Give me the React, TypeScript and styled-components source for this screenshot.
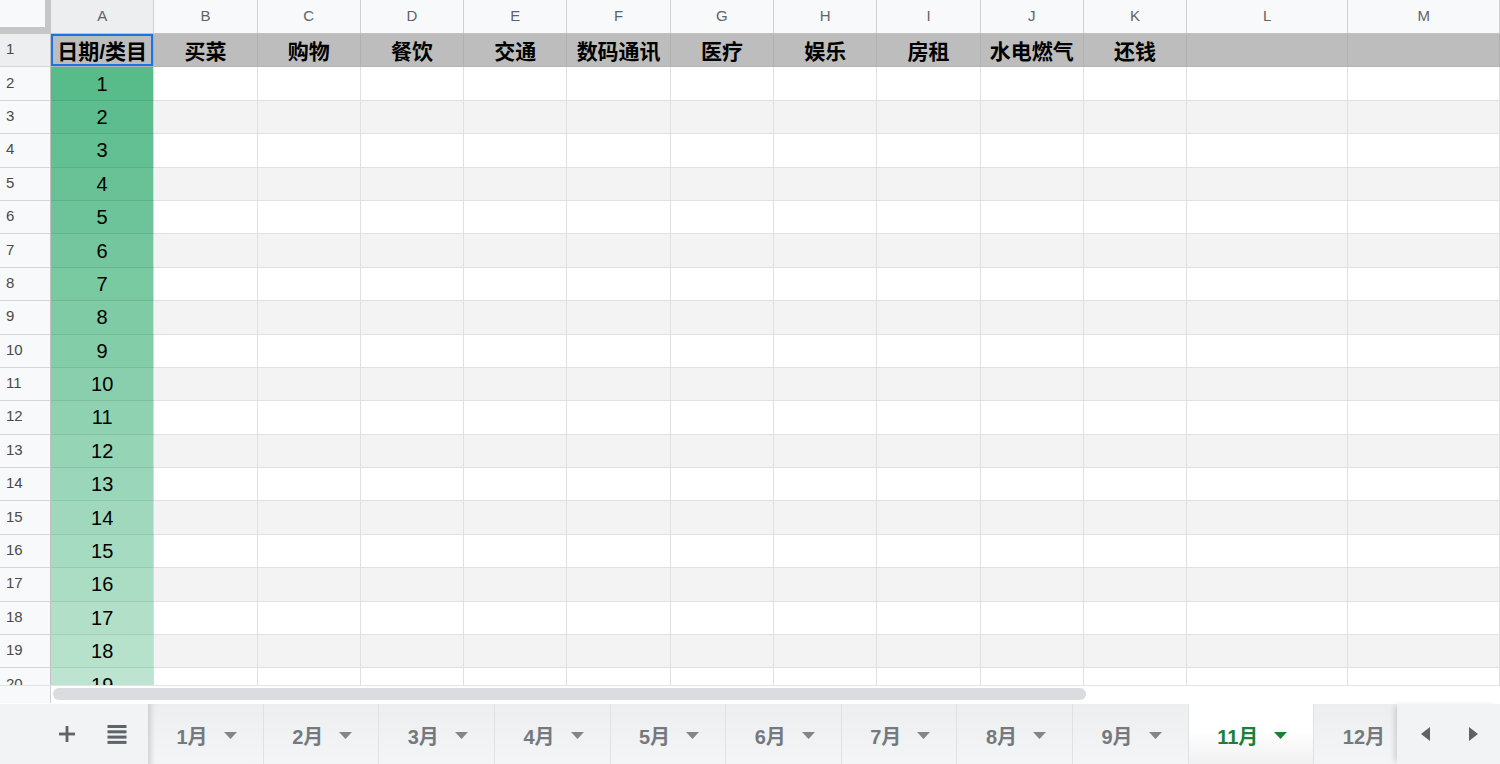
import React from "react";
import styled, { createGlobalStyle, css } from "styled-components";

const Global = createGlobalStyle`
  html, body { margin: 0; padding: 0; }
  body {
    width: 1500px;
    height: 764px;
    overflow: hidden;
    background: #ffffff;
    font-family: "Liberation Sans", "Noto Sans CJK SC", Arial, sans-serif;
  }
  * { box-sizing: border-box; }
`;

const COLS = ["A", "B", "C", "D", "E", "F", "G", "H", "I", "J", "K", "L", "M"];
const HEADERS = ["日期/类目", "买菜", "购物", "餐饮", "交通", "数码通讯", "医疗", "娱乐", "房租", "水电燃气", "还钱", "", ""];
const TABS = ["1月", "2月", "3月", "4月", "5月", "6月", "7月", "8月", "9月", "11月", "12月"];
const ACTIVE_TAB = "11月";
const ROW_COUNT = 20;

const Page = styled.div`
  width: 1500px;
  height: 764px;
  display: flex;
  flex-direction: column;
  overflow: hidden;
`;

const Sheet = styled.div`
  height: 685px;
  overflow: hidden;
  display: grid;
  grid-template-columns: 51px repeat(11, 103.3px) 161px 1fr;
  grid-template-rows: 34px;
  grid-auto-rows: 33.4px;
`;

const Corner = styled.div`
  background: #f8f9fa;
  border-right: 6px solid #c6c6c6;
  border-bottom: 7px solid #c6c6c6;
`;

const ColHeader = styled.div<{ $active?: boolean }>`
  background: ${(p) => (p.$active ? "#eceef0" : "#f8f9fa")};
  border-right: 1px solid #d0d0d0;
  border-bottom: 1px solid #c0c0c0;
  color: #5f6368;
  font-size: 15px;
  display: flex;
  align-items: center;
  justify-content: center;
  padding-bottom: 2px;
`;

const RowHeader = styled.div<{ $active?: boolean }>`
  background: ${(p) => (p.$active ? "#eceef0" : "#f8f9fa")};
  border-right: 1px solid #c0c0c0;
  border-bottom: 1px solid #d6d6d6;
  color: #4a4a4a;
  font-size: 15px;
  display: flex;
  align-items: center;
  padding-left: 6px;
  padding-bottom: 3px;
`;

const HeadCell = styled.div<{ $selected?: boolean }>`
  background: #bdbdbd;
  border-right: 1px solid #b0b0b0;
  border-bottom: 1px solid #b4b4b4;
  color: #000;
  font-size: 21px;
  font-weight: 700;
  display: flex;
  align-items: center;
  justify-content: center;
  white-space: nowrap;
  overflow: hidden;
  ${(p) =>
    p.$selected &&
    css`
      box-shadow: inset 0 0 0 2px #1a73e8;
    `}
`;

const Cell = styled.div<{ $stripe?: boolean }>`
  background: ${(p) => (p.$stripe ? "#f3f3f3" : "#ffffff")};
  border-right: 1px solid #e0e0e0;
  border-bottom: 1px solid #e0e0e0;
`;

const DateCell = styled.div`
  border-right: 1px solid #dadada;
  border-bottom: 1px solid rgba(0, 0, 0, 0.08);
  color: #000;
  font-size: 20px;
  display: flex;
  align-items: center;
  justify-content: center;
  padding-top: 1px;
`;

const ScrollStrip = styled.div`
  height: 18px;
  display: flex;
  border-top: 1px solid #e3e3e3;
  background: #ffffff;
`;

const ScrollLeft = styled.div`
  width: 51px;
  background: #f8f9fa;
  border-right: 1px solid #d0d0d0;
`;

const ScrollTrack = styled.div`
  flex: 1;
  padding: 2px 2px 3px 2px;
`;

const ScrollThumb = styled.div`
  width: 1033px;
  height: 100%;
  border-radius: 7px;
  background: #dadce0;
`;

const TabBar = styled.div`
  height: 61px;
  display: flex;
  border-top: 1px solid #ffffff;
  background: #f1f3f4;
`;

const Tools = styled.div`
  width: 148px;
  flex: none;
  display: flex;
  align-items: center;
  padding-left: 59px;
  gap: 32px;
  color: #5f6368;
  background: #f1f3f4;
`;

const Tabs = styled.div`
  flex: 1;
  display: flex;
  overflow: hidden;
  box-shadow: inset 7px 0 6px -5px rgba(0, 0, 0, 0.18);
  background: linear-gradient(#eceeef, #f4f5f6);
`;

const Tab = styled.div<{ $active?: boolean }>`
  flex: none;
  display: flex;
  align-items: center;
  gap: 16px;
  padding: 2px 26px 0 28.5px;
  border-right: 1px solid #dfe1e3;
  font-size: 20px;
  font-weight: 600;
  color: ${(p) => (p.$active ? "#188038" : "#75797e")};
  background: ${(p) =>
    p.$active ? "linear-gradient(#ffffff 0%, #ffffff 45%, #f0f0f0 100%)" : "transparent"};
`;

const Nav = styled.div`
  width: 103px;
  flex: none;
  display: flex;
  align-items: center;
  justify-content: space-between;
  padding: 0 22px 0 24px;
  background: #f1f3f4;
  box-shadow: -4px 0 6px -2px rgba(0, 0, 0, 0.16);
  z-index: 1;
  color: #5f6368;
`;

const Caret = ({ color }: { color: string }) => (
  <svg width="13" height="7" viewBox="0 0 13 7">
    <polygon points="0,0 13,0 6.5,7" fill={color} />
  </svg>
);

const PlusIcon = () => (
  <svg width="16" height="16" viewBox="0 0 16 16">
    <rect x="6.6" y="0" width="2.8" height="16" fill="currentColor" />
    <rect x="0" y="6.6" width="16" height="2.8" fill="currentColor" />
  </svg>
);

const ListIcon = () => (
  <svg width="20" height="20" viewBox="0 0 20 20">
    {[1, 6.3, 11.6, 16.9].map((y) => (
      <rect key={y} x="0.5" y={y} width="19" height="3" fill="currentColor" />
    ))}
  </svg>
);

const Arrow = ({ dir }: { dir: "left" | "right" }) => (
  <svg width="9" height="14" viewBox="0 0 9 14">
    <polygon points={dir === "left" ? "9,0 9,14 0,7" : "0,0 0,14 9,7"} fill="currentColor" />
  </svg>
);

function greenFor(v: number) {
  const t = (v - 1) / 30;
  const r = Math.round(87 + t * (255 - 87));
  const g = Math.round(187 + t * (255 - 187));
  const b = Math.round(138 + t * (255 - 138));
  return `rgb(${r}, ${g}, ${b})`;
}

export default function App() {
  const rows = [];
  for (let r = 2; r <= ROW_COUNT; r++) {
    const v = r - 1;
    rows.push(
      <React.Fragment key={r}>
        <RowHeader>{r}</RowHeader>
        <DateCell style={{ background: greenFor(v) }}>{v}</DateCell>
        {COLS.slice(1).map((c) => (
          <Cell key={c} $stripe={r % 2 === 1} />
        ))}
      </React.Fragment>
    );
  }

  return (
    <Page>
      <Global />
      <Sheet>
        <Corner />
        {COLS.map((c) => (
          <ColHeader key={c} $active={c === "A"}>
            {c}
          </ColHeader>
        ))}
        <RowHeader $active>1</RowHeader>
        {HEADERS.map((h, i) => (
          <HeadCell key={i} $selected={i === 0}>
            {h}
          </HeadCell>
        ))}
        {rows}
      </Sheet>
      <ScrollStrip>
        <ScrollLeft />
        <ScrollTrack>
          <ScrollThumb />
        </ScrollTrack>
      </ScrollStrip>
      <TabBar>
        <Tools>
          <PlusIcon />
          <ListIcon />
        </Tools>
        <Tabs>
          {TABS.map((t) => (
            <Tab key={t} $active={t === ACTIVE_TAB}>
              <span>{t}</span>
              <Caret color={t === ACTIVE_TAB ? "#188038" : "#80868b"} />
            </Tab>
          ))}
        </Tabs>
        <Nav>
          <Arrow dir="left" />
          <Arrow dir="right" />
        </Nav>
      </TabBar>
    </Page>
  );
}
